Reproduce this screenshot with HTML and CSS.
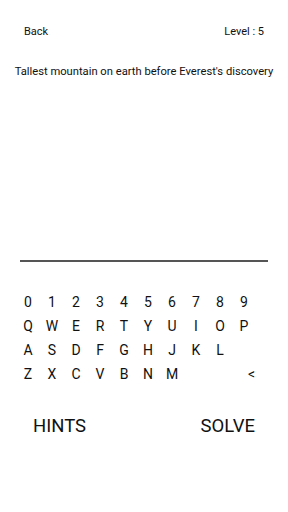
FILE: index.html
```html
<!DOCTYPE html>
<html lang="en">
<head>
  <meta charset="UTF-8">
  <meta name="viewport" content="width=device-width, initial-scale=1">
  <title>Level 5</title>
  <link rel="stylesheet" href="styles.css">
</head>
<body>
  <div class="screen">
    <!-- Barre du haut -->
    <div class="top-bar">
      <span class="back">Back</span>
      <span class="level">Level : 5</span>
    </div>

    <p class="question">Tallest mountain on earth before Everest's discovery</p>

    <!-- Zone de réponse -->
    <div class="answer"></div>

    <!-- Clavier -->
    <div class="keyboard">
      <span>0</span><span>1</span><span>2</span><span>3</span><span>4</span>
      <span>5</span><span>6</span><span>7</span><span>8</span><span>9</span>
      <span>Q</span><span>W</span><span>E</span><span>R</span><span>T</span>
      <span>Y</span><span>U</span><span>I</span><span>O</span><span>P</span>
      <span>A</span><span>S</span><span>D</span><span>F</span><span>G</span>
      <span>H</span><span>J</span><span>K</span><span>L</span><span></span>
      <span>Z</span><span>X</span><span>C</span><span>V</span><span>B</span>
      <span>N</span><span>M</span><span></span><span></span><span class="del">&lt;</span>
    </div>

    <div class="actions">
      <span>HINTS</span>
      <span>SOLVE</span>
    </div>
  </div>
</body>
</html>
```

FILE: styles.css
```css
/* Style de base */
body {
  margin: 0;
  background: #fff;
  color: #111;
  font-family: Roboto, "Noto Sans", sans-serif;
}
.screen {
  width: 288px;
  height: 512px;
  display: flex;
  flex-direction: column;
}
/* Barre du haut */
.top-bar {
  display: flex;
  justify-content: space-between;
  padding: 24px 24px 0 24px;
  font-size: 11px;
  line-height: 16px;
}
.question {
  margin: 24px 0 0 0;
  text-align: center;
  font-size: 11.2px;
  line-height: 16px;
}
/* Ligne de réponse */
.answer {
  height: 180px;
  margin: 0 20px;
  border-bottom: 2px solid #555;
}
/* Clavier 10 colonnes */
.keyboard {
  display: grid;
  grid-template-columns: repeat(10, 24px);
  grid-auto-rows: 24px;
  padding-left: 16px;
  margin-top: 28px;
  font-size: 14px;
  line-height: 24px;
}
.keyboard span {
  text-align: center;
}
.keyboard .del {
  text-align: right;
  padding-right: 1px;
}
/* Boutons du bas */
.actions {
  display: flex;
  justify-content: space-between;
  padding: 0 33px;
  margin-top: 28px;
  font-size: 18.5px;
  line-height: 24px;
}
```
